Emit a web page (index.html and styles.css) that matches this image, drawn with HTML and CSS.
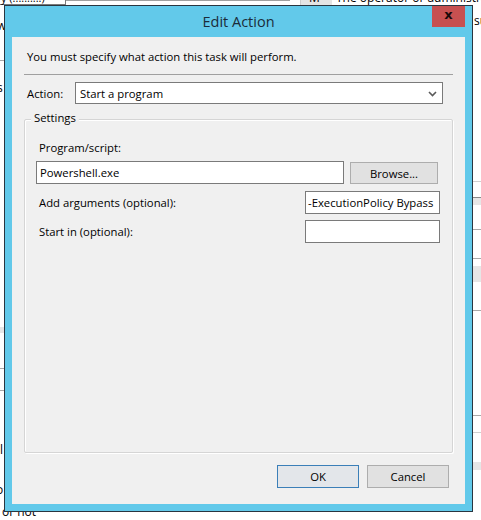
FILE: index.html
```html
<!DOCTYPE html>
<html>
<head>
<meta charset="utf-8">
<link rel="stylesheet" href="styles.css">
</head>
<body>
<div class="backdrop">
  <div class="bg-top-left"><span class="bg-cell">y (..........)</span></div>
  <div class="bg-top-right"><span class="bg-hdr">M</span><span class="bg-desc">The operator or administrat</span></div>
  <div class="bg-frag f-w">w</div>
  <div class="bg-frag f-s">s</div>
  <div class="bg-frag f-l">l</div>
  <div class="bg-frag f-o">o</div>
  <div class="bg-frag f-ornot">or not</div>
  <div class="bg-frag f-su">su</div>
  <div class="bg-line l1"></div>
  <div class="bg-band b1"></div>
  <div class="bg-line l2"></div>
  <div class="bg-line l3"></div>
  <div class="bg-line r1"></div>
  <div class="bg-band r2"></div>
  <div class="bg-line r3"></div>
  <div class="bg-line r4"></div>
  <div class="bg-band r5"></div>
  <div class="bg-line r6"></div>
  <div class="bg-line r7"></div>
  <div class="bg-line r8"></div>
  <div class="bg-band r9"></div>
</div>

<div class="dialog">
  <div class="titlebar">
    <span class="title">Edit Action</span>
    <div class="close">x</div>
  </div>
  <div class="client">
    <p class="intro">You must specify what action this task will perform.</p>
    <div class="separator"></div>
    <div class="action-row">
      <span class="label">Action:</span>
      <div class="select">
        <span>Start a program</span>
        <svg class="chev" width="9" height="6" viewBox="0 0 9 6"><path d="M1 1 L4.5 4.5 L8 1" fill="none" stroke="#5a5a5a" stroke-width="1.6"/></svg>
      </div>
    </div>
    <div class="group">
      <span class="legend">Settings</span>
      <div class="label prog-label">Program/script:</div>
      <div class="prog-row">
        <div class="input prog-input">Powershell.exe</div>
        <div class="btn browse">Browse...</div>
      </div>
      <div class="field-row args-row">
        <span class="label">Add arguments (optional):</span>
        <div class="input small-input">-ExecutionPolicy Bypass</div>
      </div>
      <div class="field-row start-row">
        <span class="label">Start in (optional):</span>
        <div class="input small-input"></div>
      </div>
    </div>
    <div class="buttons">
      <div class="btn ok">OK</div>
      <div class="btn cancel">Cancel</div>
    </div>
  </div>
</div>
</body>
</html>
```

FILE: styles.css
```css
* { box-sizing: border-box; }
html, body {
  margin: 0;
  padding: 0;
  width: 481px;
  height: 520px;
  overflow: hidden;
  background: #ffffff;
  font-family: "Open Sans", "Noto Sans", sans-serif;
  font-size: 11.3px;
  color: #000;
}
.backdrop {
  position: relative;
  width: 481px;
  height: 520px;
}
.bg-top-left {
  position: absolute;
  left: 0; top: -9px;
  width: 66px; height: 14px;
  border: 1px solid #7a7a7a;
  border-left: none;
  font-size: 11px;
  line-height: 11px;
  padding-left: 1px;
}
.bg-top-left::after {
  content: "";
  position: absolute;
  left: 66px; top: 8px;
  width: 224px; height: 1px;
  background: #a0a0a0;
}
.bg-top-right {
  position: absolute;
  left: 300px; top: -8px;
  height: 14px;
  display: flex;
  font-size: 12px;
  line-height: 12px;
}
.bg-hdr {
  width: 32px;
  background: #e4e4e4;
  padding-left: 8px;
  border-left: 1px solid #ccc;
}
.bg-desc { padding-left: 4px; white-space: nowrap; }
.bg-frag {
  position: absolute;
  font-size: 12px;
  line-height: 14px;
}
.f-w { left: -3px; top: 19px; }
.f-s { left: -3px; top: 81px; }
.f-l { left: 0px; top: 443px; }
.f-o { left: -4px; top: 483px; }
.f-ornot { left: 2px; top: 505px; }
.f-su { left: 474px; top: 14px; }
.bg-line { position: absolute; height: 1px; background: #a9a9a9; }
.bg-band { position: absolute; background: #e6e6e6; }
.l1 { left: 0; width: 4px; top: 60px; }
.b1 { left: 0; width: 4px; top: 327px; height: 6px; }
.l2 { left: 0; width: 4px; top: 368px; }
.l3 { left: 0; width: 4px; top: 390px; }
.r1 { left: 473px; width: 8px; top: 181px; background: #d0d0d0; }
.r2 { left: 473px; width: 8px; top: 197px; height: 8px; border-top: 1px solid #888; }
.r3 { left: 473px; width: 8px; top: 229px; }
.r4 { left: 473px; width: 8px; top: 258px; }
.r5 { left: 473px; width: 8px; top: 266px; height: 16px; }
.r6 { left: 473px; width: 8px; top: 310px; }
.r7 { left: 473px; width: 8px; top: 415px; }
.r8 { left: 473px; width: 8px; top: 432px; background: #d0d0d0; }
.r9 { left: 473px; width: 8px; top: 462px; height: 8px; }

.dialog {
  position: absolute;
  left: 4px;
  top: 5px;
  width: 469px;
  height: 507px;
  border: 1px solid #2a3640;
  background: #62c9ea;
  padding: 0 7px 7px 7px;
  display: flex;
  flex-direction: column;
}
.titlebar {
  height: 31px;
  display: flex;
  align-items: center;
  justify-content: center;
  flex: none;
}
.title {
  font-family: "Open Sans", "Noto Sans", sans-serif;
  font-size: 14.5px;
  color: #1b2c3a;
  margin-top: 0;
  margin-left: 0;
}
.close {
  position: absolute;
  top: 0;
  right: 7px;
  width: 33px;
  height: 21px;
  background: #c75050;
  color: #1a0a0a;
  font-family: "DejaVu Sans", sans-serif;
  font-weight: bold;
  font-size: 13px;
  line-height: 18px;
  text-align: center;
}
.client {
  flex: 1;
  background: #f0f0f0;
  padding: 0 12px;
  display: flex;
  flex-direction: column;
}
.intro {
  margin: 12px 0 0 3px;
  line-height: 16px;
  white-space: nowrap;
}
.separator {
  height: 1px;
  background: #a0a0a0;
  margin-top: 9px;
}
.action-row {
  display: flex;
  align-items: center;
  margin-top: 7px;
  padding-left: 3px;
}
.action-row .label { width: 48px; }
.select {
  width: 368px;
  height: 22px;
  border: 1px solid #7a7a7a;
  background: #fff;
  display: flex;
  align-items: center;
  justify-content: space-between;
  padding: 0 5px 0 4px;
}
.chev { margin-top: 1px; }
.group {
  position: relative;
  margin-top: 15px;
  height: 334px;
  border: 1px solid #d5d5d5;
  box-shadow: inset 1px 1px 0 #ffffff, 1px 1px 0 #ffffff;
  border-radius: 2px;
  padding: 0 11px;
}
.legend {
  position: absolute;
  left: 6px;
  top: -10px;
  background: #f0f0f0;
  padding: 0 3px;
  line-height: 16px;
}
.prog-label {
  margin-top: 20px;
  margin-left: 3px;
  line-height: 16px;
}
.prog-row {
  display: flex;
  align-items: center;
  margin-top: 5px;
}
.input {
  height: 23px;
  border: 1px solid #7a7a7a;
  background: #fff;
  padding: 0 3px;
  display: flex;
  align-items: center;
  white-space: nowrap;
  overflow: hidden;
}
.prog-input { width: 308px; }
.btn {
  display: flex;
  align-items: center;
  justify-content: center;
  background: #e1e1e1;
  border: 1px solid #adadad;
  height: 22px;
}
.browse {
  width: 88px;
  margin-left: 6px;
  margin-top: 1px;
}
.field-row {
  display: flex;
  align-items: center;
  justify-content: space-between;
  padding-left: 3px;
  margin-right: 1px;
}
.args-row { margin-top: 7px; }
.start-row { margin-top: 6px; }
.small-input { width: 135px; padding: 0 2px; }
.buttons {
  display: flex;
  justify-content: flex-end;
  gap: 8px;
  margin-top: 12px;
  margin-right: 4px;
}
.ok, .cancel { width: 82px; height: 23px; }
.ok {
  border-color: #3b7fb8;
  background: #e3e6ea;
}
```
